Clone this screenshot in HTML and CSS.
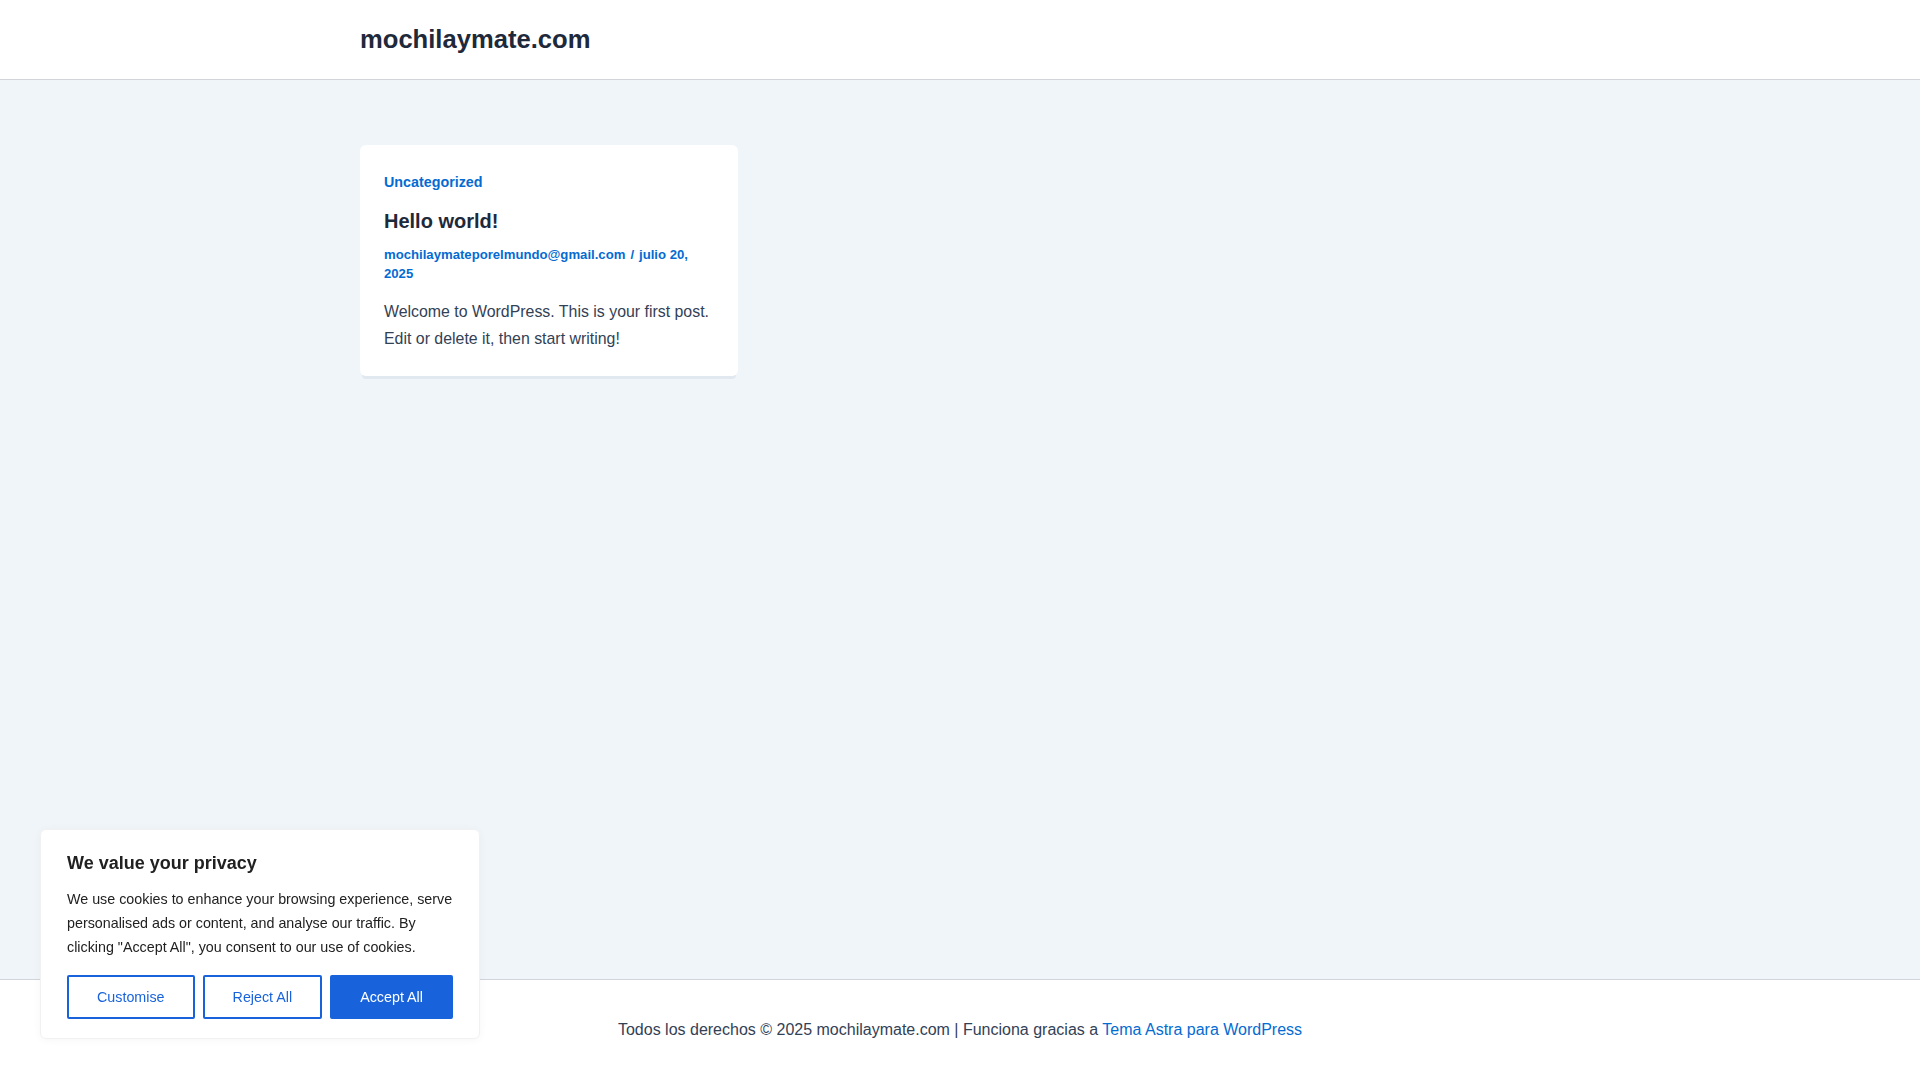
FILE: index.html
```html
<!DOCTYPE html>
<html lang="es">
<head>
<meta charset="utf-8">
<title>mochilaymate.com</title>
<link rel="stylesheet" href="styles.css">
</head>
<body>
<div class="page">
  <header class="site-header">
    <div class="container">
      <a class="site-title" href="#">mochilaymate.com</a>
    </div>
  </header>
  <main class="site-main">
    <div class="container">
      <article class="post-card">
        <a class="post-cat" href="#">Uncategorized</a>
        <h2 class="post-title">Hello world!</h2>
        <div class="post-meta"><a href="#">mochilaymateporelmundo@gmail.com</a><span class="sep">/</span><a href="#">julio 20, 2025</a></div>
        <p class="post-excerpt">Welcome to WordPress. This is your first post. Edit or delete it, then start writing!</p>
      </article>
    </div>
  </main>
  <footer class="site-footer">
    <p>Todos los derechos © 2025 mochilaymate.com | Funciona gracias a <a href="#">Tema Astra para WordPress</a></p>
  </footer>
</div>
<div class="cookie-box">
  <h3 class="cookie-title">We value your privacy</h3>
  <p class="cookie-text">We use cookies to enhance your browsing experience, serve personalised ads or content, and analyse our traffic. By clicking "Accept All", you consent to our use of cookies.</p>
  <div class="cookie-btns">
    <button class="cky-btn">Customise</button>
    <button class="cky-btn">Reject All</button>
    <button class="cky-btn cky-accept">Accept All</button>
  </div>
</div>
</body>
</html>
```
FILE: styles.css
```css
* { box-sizing: border-box; }
html, body { margin: 0; padding: 0; }
body {
  font-family: "Liberation Sans", Arial, sans-serif;
  color: #334155;
  background: #ffffff;
}
a { text-decoration: none; }
.page {
  min-height: 1080px;
  display: flex;
  flex-direction: column;
}
.container {
  width: 1200px;
  margin: 0 auto;
}
.site-header {
  height: 80px;
  background: #ffffff;
  border-bottom: 1px solid #d1d5db;
  display: flex;
  align-items: center;
}
.site-title {
  display: block;
  font-size: 25.6px;
  font-weight: 700;
  line-height: 30px;
  color: #1e293b;
  margin-top: -2px;
}
.site-main {
  flex: 1;
  background: #f0f5fa;
  padding-top: 65px;
}
.post-card {
  width: 378px;
  background: #ffffff;
  border-radius: 6px;
  padding: 25px 24px 24px;
  box-shadow: 0 5px 0 -2px #e2e8f0;
}
.post-cat {
  display: block;
  font-size: 14.3px;
  font-weight: 700;
  line-height: 24px;
  color: #046bd2;
  margin-bottom: 12px;
}
.post-title {
  margin: 0 0 9px;
  font-size: 20px;
  font-weight: 700;
  line-height: 30px;
  color: #1e293b;
}
.post-meta {
  font-size: 13.15px;
  font-weight: 700;
  line-height: 19px;
  color: #046bd2;
  margin-bottom: 15px;
}
.post-meta a { color: #046bd2; }
.post-meta .sep { margin: 0 5px; }
.post-excerpt {
  margin: 0;
  font-size: 15.9px;
  line-height: 27px;
  color: #334155;
}
.site-footer {
  height: 101px;
  border-top: 1px solid #d1d5db;
  background: #ffffff;
  display: flex;
  align-items: center;
  justify-content: center;
}
.site-footer p {
  margin: 0;
  font-size: 16px;
  line-height: 24px;
  color: #334155;
}
.site-footer a { color: #046bd2; }
.cookie-box {
  position: fixed;
  left: 40px;
  bottom: 41px;
  width: 440px;
  background: #ffffff;
  border: 1px solid #f1f1f1;
  border-radius: 6px;
  box-shadow: 0 1px 8px rgba(0, 0, 0, 0.04);
  padding: 21px 26px 19px;
  color: #212121;
}
.cookie-title {
  margin: 0 0 12px;
  font-size: 18px;
  font-weight: 700;
  line-height: 24px;
  color: #212121;
}
.cookie-text {
  margin: 0 0 16px;
  font-size: 14.3px;
  line-height: 24px;
  color: #212121;
}
.cookie-btns {
  display: flex;
  gap: 8px;
}
.cky-btn {
  flex: 1 1 auto;
  font-family: "Liberation Sans", Arial, sans-serif;
  font-size: 14.3px;
  line-height: 24px;
  padding: 8px 26px;
  border: 2px solid #1863dc;
  border-radius: 2px;
  background: #ffffff;
  color: #1863dc;
  cursor: pointer;
}
.cky-accept {
  background: #1863dc;
  color: #ffffff;
}
```
